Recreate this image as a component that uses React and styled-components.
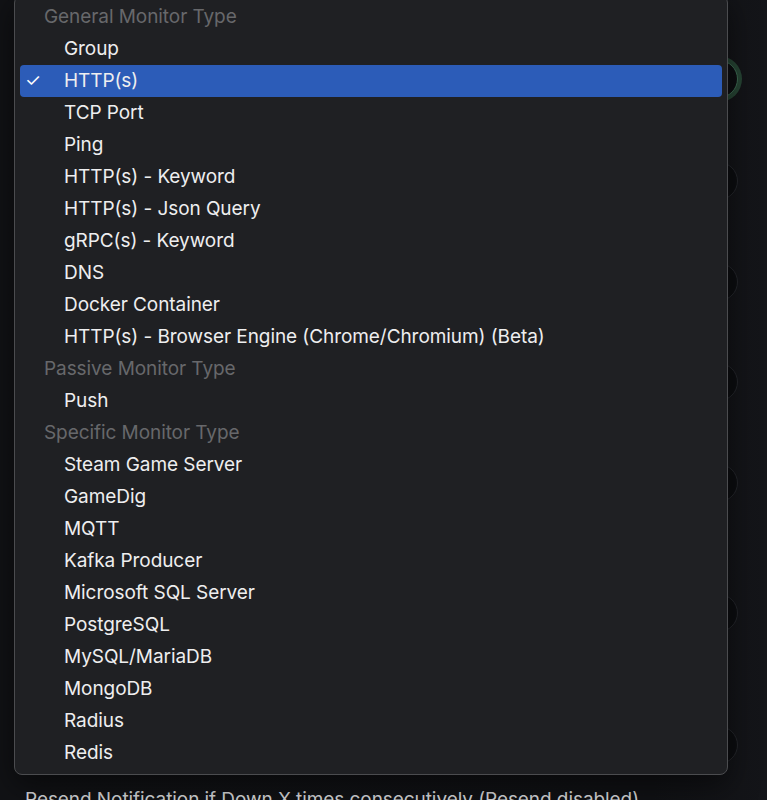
import React from "react";
import styled, { createGlobalStyle } from "styled-components";

const GlobalStyle = createGlobalStyle`
  html, body {
    margin: 0;
    padding: 0;
    background: #111215;
  }
  * {
    box-sizing: border-box;
  }
`;

const groups = [
  {
    label: "General Monitor Type",
    items: [
      "Group",
      "HTTP(s)",
      "TCP Port",
      "Ping",
      "HTTP(s) - Keyword",
      "HTTP(s) - Json Query",
      "gRPC(s) - Keyword",
      "DNS",
      "Docker Container",
      "HTTP(s) - Browser Engine (Chrome/Chromium) (Beta)",
    ],
  },
  {
    label: "Passive Monitor Type",
    items: ["Push"],
  },
  {
    label: "Specific Monitor Type",
    items: [
      "Steam Game Server",
      "GameDig",
      "MQTT",
      "Kafka Producer",
      "Microsoft SQL Server",
      "PostgreSQL",
      "MySQL/MariaDB",
      "MongoDB",
      "Radius",
      "Redis",
    ],
  },
];

// form that sits behind the open select
const fields = [
  { label: "Monitor Type", focused: true, space: 18 },
  { label: "Friendly Name", space: 22 },
  { label: "URL", space: 21 },
  { label: "Heartbeat Interval (Check every 60 seconds)", space: 20 },
  { label: "Retries", space: 21 },
  { label: "Heartbeat Retry Interval (Retry every 60 seconds)", space: 50 },
  { label: "Request Timeout (Timeout after 48 seconds)", space: 52 },
];

const Page = styled.div`
  position: relative;
  width: 767px;
  height: 800px;
  overflow: hidden;
  background: linear-gradient(90deg, #111215 0%, #101114 85%, #141519 100%);
  font-family: Inter, "Liberation Sans", sans-serif;
`;

const Form = styled.form`
  display: flex;
  flex-direction: column;
  padding: 0 29px 0 25px;
`;

const Field = styled.div`
  display: flex;
  flex-direction: column;
  gap: 14px;
  padding-top: ${(p) => p.$space}px;
`;

const Label = styled.label`
  font-size: 19px;
  line-height: 28px;
  height: 28px;
  color: #d6d7d9;
  white-space: nowrap;
  letter-spacing: -0.07px;
`;

const Input = styled.div`
  height: 38px;
  border-radius: 19px;
  background: #0c0d10;
  border: 1px solid ${(p) => (p.$focused ? "#3d6a52" : "#24262b")};
  box-shadow: ${(p) => (p.$focused ? "0 0 0 4px rgba(46, 84, 62, 0.75)" : "none")};
`;

const Menu = styled.div`
  position: absolute;
  top: -5px;
  left: 14px;
  width: 714px;
  padding: 5px 5px;
  background: #1f2023;
  border: 1px solid #4b4c4f;
  border-radius: 8px;
  box-shadow: 0 10px 30px rgba(0, 0, 0, 0.5);
  font-family: Inter, "Liberation Sans", sans-serif;
  font-size: 19px;
  letter-spacing: -0.07px;
`;

const GroupLabel = styled.div`
  height: 32px;
  line-height: 32px;
  padding-left: 24px;
  color: #67686b;
`;

const Option = styled.div`
  position: relative;
  height: 32px;
  line-height: 32px;
  padding-left: 44px;
  border-radius: 4px;
  color: #eeeeef;
  background: ${(p) => (p.$selected ? "#2c5cb8" : "transparent")};
  white-space: nowrap;
`;

const Check = styled.span`
  position: absolute;
  left: 5px;
  top: 0;
  font-size: 18px;
  color: #ffffff;
`;

export default function App() {
  return (
    <Page>
      <GlobalStyle />
      <Form>
        {fields.map((f) => (
          <Field key={f.label} $space={f.space}>
            <Label>{f.label}</Label>
            <Input $focused={f.focused} />
          </Field>
        ))}
        <Field $space={22}>
          <Label>Resend Notification if Down X times consecutively (Resend disabled)</Label>
          <Input />
        </Field>
      </Form>
      <Menu>
        {groups.map((g) => (
          <div key={g.label}>
            <GroupLabel>{g.label}</GroupLabel>
            {g.items.map((item) => (
              <Option key={item} $selected={item === "HTTP(s)"}>
                {item === "HTTP(s)" && <Check>✓</Check>}
                {item}
              </Option>
            ))}
          </div>
        ))}
      </Menu>
    </Page>
  );
}
